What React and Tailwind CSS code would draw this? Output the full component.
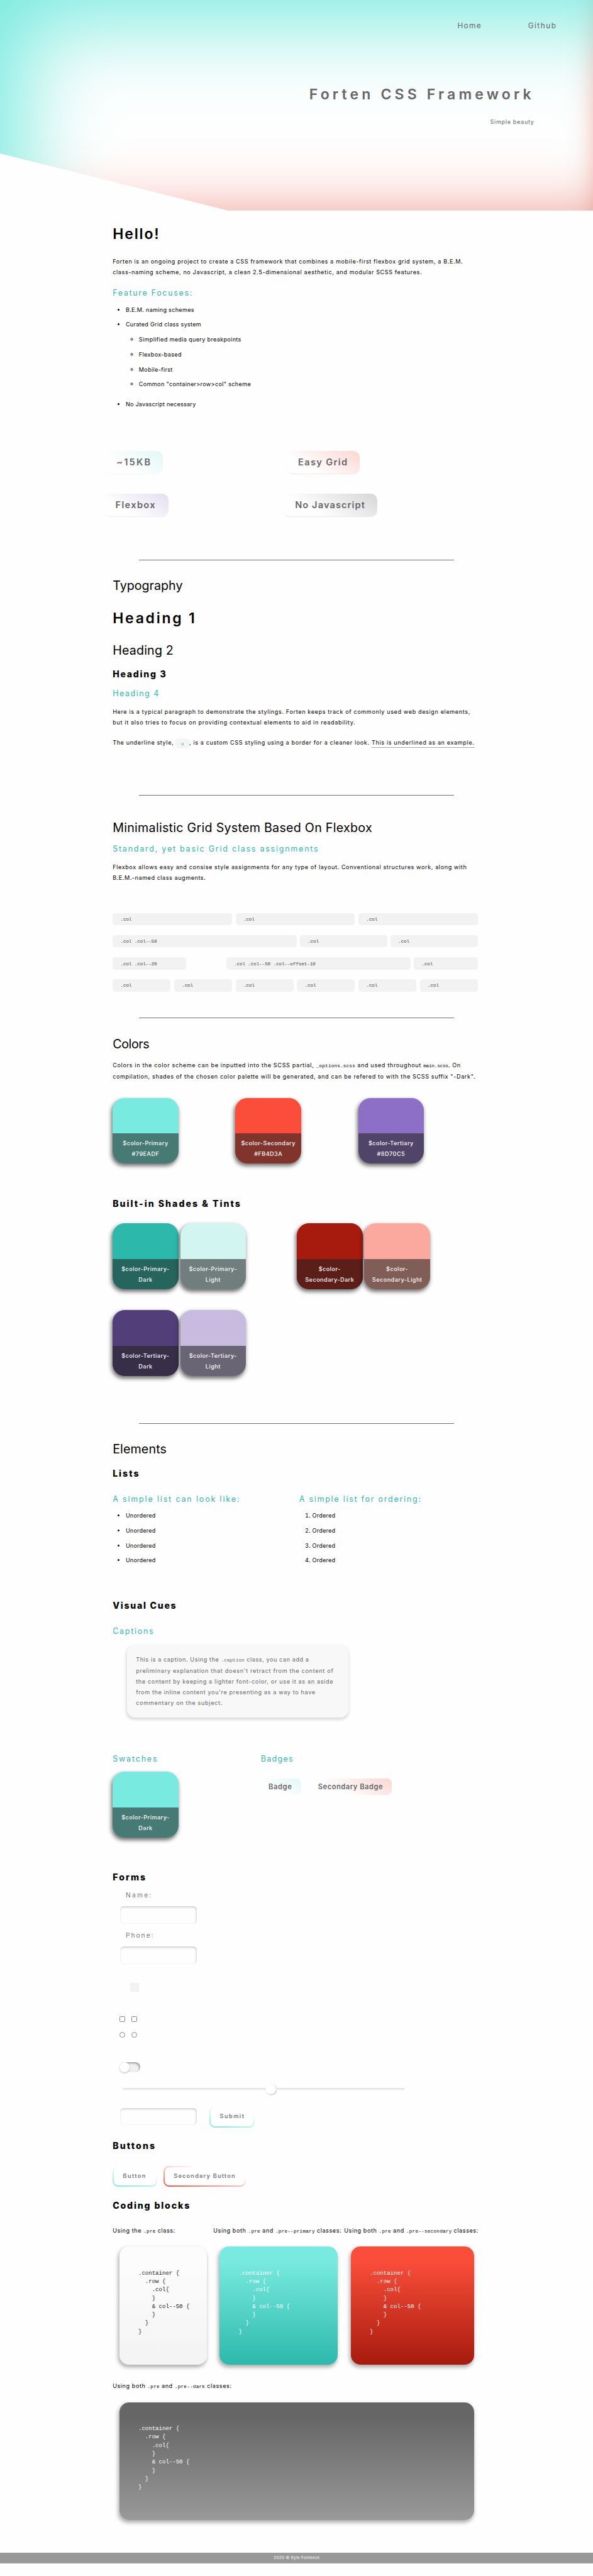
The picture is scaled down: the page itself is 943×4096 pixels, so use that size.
import React from "react";

const H1 = ({ className = "", children }) => (
  <h1 className={`h-[40px] pt-px text-[33px] font-semibold leading-[40px] whitespace-nowrap ${className}`}>{children}</h1>
);
const H2 = ({ className = "", children }) => (
  <h2 className={`h-[36px] pt-[0.8px] text-[28.2px] leading-[36px] whitespace-nowrap ${className}`}>{children}</h2>
);
const H3 = ({ className = "", children }) => (
  <h3 className={`text-[20.2px] font-extrabold leading-[28px] whitespace-nowrap ${className}`}>{children}</h3>
);
const H4 = ({ className = "", children }) => (
  <h4 className={`text-[18px] leading-[24px] text-[#2cb9ab] whitespace-nowrap ${className}`}>{children}</h4>
);
const Code = ({ className = "tracking-[0.35px]", children }) => (
  <code className={`font-['Liberation_Mono',monospace] text-[11px] leading-none ${className}`}>{children}</code>
);
const Rule = ({ className = "" }) => <div className={`ml-[60px] h-px w-[719px] bg-[#6e6e6e] ${className}`} />;

const BigBadge = ({ className, children }) => (
  <div className={`h-[54px] rounded-[15px] border-b pt-[10.5px] text-[21px] font-semibold leading-[33px] text-[#666] whitespace-nowrap ${className}`}>
    {children}
  </div>
);

const Col = ({ className = "flex-1", children }) => (
  <div className={`h-[28px] rounded-[6px] bg-[#f2f2f2] pl-[17.6px] pt-[2px] font-['Liberation_Mono',monospace] text-[11px] leading-[28px] tracking-[-0.18px] text-[#444] whitespace-nowrap ${className}`}>
    {children}
  </div>
);

const Swatch = ({ color, lines, className = "" }) => (
  <div className={`flex h-[150px] w-[150px] flex-none flex-col justify-end overflow-hidden rounded-[28px] shadow-[-2px_5px_9px_rgba(0,0,0,0.55)] ${color} ${className}`}>
    <div className="h-[69px] bg-[rgba(34,34,34,0.56)] pt-[11.6px] text-center text-[13px] font-medium leading-[24px] tracking-[0.71px] text-[#fcfcfc] whitespace-nowrap">
      {lines.map((l) => <div key={l}>{l}</div>)}
    </div>
  </div>
);

const Field = ({ className = "" }) => (
  <div className={`h-[39px] w-[175px] rounded-[8px] shadow-[inset_-1px_2px_5px_rgba(0,0,0,0.22)] ${className}`} />
);

const PRIMARY_BORDER = "[background:linear-gradient(#fefefe,#fefefe)_padding-box,linear-gradient(13deg,#79eadf,#fefefe_70%)_border-box]";
const SECONDARY_BORDER = "[background:linear-gradient(#fefefe,#fefefe)_padding-box,linear-gradient(13deg,#fb4d3a,#fefefe_70%)_border-box]";
const Button = ({ className, children }) => (
  <div className={`h-[48px] rounded-[13px] border-[3px] border-transparent pl-[20.5px] text-[13px] font-semibold text-[#777] whitespace-nowrap ${className}`}>
    {children}
  </div>
);

const PRE = `.container {
  .row {
    .col{
    }
    & col--50 {
    }
  }
}`;
const Pre = ({ className }) => (
  <pre className={`h-[269px] rounded-[22px] pl-[43.5px] pt-[51px] font-['Liberation_Mono',monospace] text-[13px] leading-[19.07px] shadow-[-2px_5px_9px_rgba(0,0,0,0.33)] ${className}`}>
    {PRE}
  </pre>
);

export default function App() {
  return (
    <div className="w-full overflow-hidden bg-[#fefefe]">
      <div className="flex w-[1353px] flex-col pb-[27px] font-['Inter',sans-serif] text-[13px] leading-[24px] text-black [zoom:0.6972]">
        <header className="flex h-[480px] flex-col items-end bg-[#fefefe] text-[#666] shadow-[inset_100px_100px_200px_-50px_#79eadf,inset_-66px_0px_80px_-100px_#fb4d3a,inset_0px_-150px_180px_-200px_#fb4d3a] [clip-path:polygon(0_0,100%_0,100%_100%,520px_100%,0_350px)] whitespace-nowrap">
          <nav className="mt-[46.8px] flex pr-[83px] text-[17px]">
            <span className="mr-[105.5px] tracking-[1.98px]">Home</span>
            <span className="tracking-[2.14px]">Github</span>
          </nav>
          <div className="mt-[126.2px] pr-[134px] text-[33px] font-semibold leading-[40px] tracking-[7.4px]">Forten CSS Framework</div>
          <div className="mt-[30.3px] pr-[134.5px] tracking-[0.99px]">Simple beauty</div>
        </header>

        <main className="ml-[257px] flex w-[833px] flex-col">
          <H1 className="mt-[34px] tracking-[2.68px]">Hello!</H1>
          <p className="mt-[31.6px] tracking-[0.9px] whitespace-nowrap">
            Forten is an ongoing project to create a CSS framework that combines a mobile-first flexbox grid system, a B.E.M.<br />
            class-naming scheme, no Javascript, a clean 2.5-dimensional aesthetic, and modular SCSS features.
          </p>
          <H4 className="mt-[23.7px] tracking-[2.37px]">Feature Focuses:</H4>
          <ul className="mt-[14px] list-disc space-y-[10px] pl-[29.8px] tracking-[0.44px]">
            <li>B.E.M. naming schemes</li>
            <li>
              Curated Grid class system
              <ul className="mt-[10px] mb-[22px] list-[circle] space-y-[10px] pl-[30px] tracking-[0.5px]">
                <li>Simplified media query breakpoints</li>
                <li>Flexbox-based</li>
                <li>Mobile-first</li>
                <li>Common "container&gt;row&gt;col" scheme</li>
              </ul>
            </li>
            <li className="tracking-[0.34px]">No Javascript necessary</li>
          </ul>

          <div className="mt-[92.5px] flex">
            <BigBadge className="-ml-[18.4px] w-[133.2px] border-[#f0fafa] bg-[linear-gradient(30deg,#fefefe_35%,#e0f8f6)] pl-[27px] tracking-[3.15px]">~15KB</BigBadge>
            <BigBadge className="ml-[282.2px] w-[167px] border-[#fbe6e3] bg-[linear-gradient(30deg,#fefefe_30%,#fbd6d1)] pl-[26px] tracking-[1.91px]">Easy Grid</BigBadge>
          </div>
          <div className="mt-[44px] flex">
            <BigBadge className="-ml-[21.3px] w-[148px] border-[#efecf5] bg-[linear-gradient(30deg,#fefefe_30%,#e3def0)] pl-[27.5px] tracking-[1.91px]">Flexbox</BigBadge>
            <BigBadge className="ml-[262.3px] w-[214px] border-[#e8e8e8] bg-[linear-gradient(30deg,#fefefe_30%,#d6d6d6)] pl-[27px] tracking-[1.54px]">No Javascript</BigBadge>
          </div>
          <Rule className="mt-[97px]" />

          <H2 className="mt-[40.2px] tracking-[0.01px]">Typography</H2>
          <H1 className="mt-[36.8px] tracking-[3.94px]">Heading 1</H1>
          <H2 className="mt-[34.2px] tracking-[0.24px]">Heading 2</H2>
          <H3 className="mt-[23.1px] tracking-[2.49px]">Heading 3</H3>
          <H4 className="mt-[18.3px] tracking-[2.16px]">Heading 4</H4>
          <p className="mt-[18px] tracking-[0.91px] whitespace-nowrap">
            Here is a typical paragraph to demonstrate the stylings. Forten keeps track of commonly used web design elements,<br />
            <span className="tracking-[0.98px]">but it also tries to focus on providing contextual elements to aid in readability.</span>
          </p>
          <p className="mt-[22.7px] flex h-[24px] tracking-[0.89px] whitespace-nowrap">
            <span>The underline style,</span>
            <code className="mt-px ml-[4.5px] h-[23px] w-[31px] rounded-[6px] bg-[#f5f5f5] text-center font-['Liberation_Mono',monospace] text-[11px] leading-[26px] text-[#2cb9ab]">u</code>
            <span>, is a custom CSS styling using a border for a cleaner look.</span>
            <span className="ml-[4.8px] h-[22.7px] border-b-2 border-[#a8a8a8] tracking-[0.92px]">This is underlined as an example.</span>
          </p>
          <Rule className="mt-[106.5px]" />

          <H2 className="mt-[54.9px] tracking-[0.38px]">Minimalistic Grid System Based On Flexbox</H2>
          <H4 className="mt-[19.7px] tracking-[2.51px]">Standard, yet basic Grid class assignments</H4>
          <p className="mt-[17.7px] tracking-[0.89px] whitespace-nowrap">
            Flexbox allows easy and consise style assignments for any type of layout. Conventional structures work, along with<br />
            <span className="tracking-[0.8px]">B.E.M.-named class augments.</span>
          </p>
          <div className="mt-[67.7px] flex gap-[8px]">
            <Col>.col</Col><Col>.col</Col><Col>.col</Col>
          </div>
          <div className="mt-[22px] flex gap-[7px]">
            <Col className="w-[420px]">.col .col--50</Col><Col>.col</Col><Col>.col</Col>
          </div>
          <div className="mt-[23px] flex gap-[8px]">
            <Col className="w-[168px]">.col .col--20</Col>
            <Col className="ml-[83px] w-[420px]">.col .col--50 .col--offset-10</Col>
            <Col>.col</Col>
          </div>
          <div className="mt-[22px] flex gap-[8px]">
            <Col>.col</Col><Col>.col</Col><Col>.col</Col><Col>.col</Col><Col>.col</Col><Col>.col</Col>
          </div>
          <Rule className="mt-[60px]" />

          <H2 className="mt-[40.6px] tracking-[-0.56px]">Colors</H2>
          <p className="mt-[17.7px] leading-[26px] tracking-[0.97px] whitespace-nowrap">
            Colors in the color scheme can be inputted into the SCSS partial, <Code className="tracking-[0.27px]">_options.scss</Code> and used throughout <Code className="tracking-[-0.3px]">main.scss</Code>. On<br />
            <span className="tracking-[0.91px]">compilation, shades of the chosen color palette will be generated, and can be refered to with the SCSS suffix "-Dark".</span>
          </p>
          <div className="mt-[35.7px] flex gap-[130px]">
            <Swatch color="bg-[#79eadf]" lines={["$color-Primary", "#79EADF"]} />
            <Swatch color="bg-[#fb4d3a]" lines={["$color-Secondary", "#FB4D3A"]} />
            <Swatch color="bg-[#8d70c5]" lines={["$color-Tertiary", "#8D70C5"]} />
          </div>

          <H3 className="mt-[76.6px] tracking-[2.92px]">Built-in Shades &amp; Tints</H3>
          <div className="mt-[31.4px] flex">
            <Swatch color="bg-[#2cb9ab]" lines={["$color-Primary-", "Dark"]} />
            <Swatch className="ml-[4px]" color="bg-[#d3f5f1]" lines={["$color-Primary-", "Light"]} />
            <Swatch className="ml-[116px]" color="bg-[#a61b0d]" lines={["$color-", "Secondary-Dark"]} />
            <Swatch className="ml-[4px]" color="bg-[#fba99e]" lines={["$color-", "Secondary-Light"]} />
          </div>
          <div className="mt-[48px] flex gap-[4px]">
            <Swatch color="bg-[#523e78]" lines={["$color-Tertiary-", "Dark"]} />
            <Swatch color="bg-[#c7bbdf]" lines={["$color-Tertiary-", "Light"]} />
          </div>
          <Rule className="mt-[108px]" />

          <H2 className="mt-[39.9px] tracking-[0.16px]">Elements</H2>
          <H3 className="mt-[23.4px] tracking-[2.84px]">Lists</H3>
          <div className="mt-[33.3px] flex">
            <div className="w-[425.4px]">
              <H4 className="tracking-[2.62px]">A simple list can look like:</H4>
              <ul className="mt-[14px] list-disc space-y-[10px] pl-[29.8px] tracking-[0.29px]">
                <li>Unordered</li><li>Unordered</li><li>Unordered</li><li>Unordered</li>
              </ul>
            </div>
            <div>
              <H4 className="tracking-[2.48px]">A simple list for ordering:</H4>
              <ol className="mt-[14px] list-decimal space-y-[10px] pl-[29.8px] tracking-[0.37px]">
                <li>Ordered</li><li>Ordered</li><li>Ordered</li><li>Ordered</li>
              </ol>
            </div>
          </div>

          <H3 className="mt-[76px] tracking-[2.49px]">Visual Cues</H3>
          <H4 className="mt-[33px] tracking-[2.45px]">Captions</H4>
          <div className="mt-[19.4px] ml-[32.7px] h-[165px] w-[505.3px] rounded-[18px] bg-[#f8f8f8] pt-[22px] pl-[20.4px] tracking-[1px] text-[#666] shadow-[-1px_3px_7px_rgba(0,0,0,0.17)] whitespace-nowrap">
            <div className="h-[26px] tracking-[0.86px]">This is a caption. Using the <Code className="tracking-[0.11px]">.caption</Code> class, you can add a</div>
            <div className="tracking-[1.03px]">preliminary explanation that doesn't retract from the content of</div>
            <div className="tracking-[0.96px]">the content by keeping a lighter font-color, or use it as an aside</div>
            <div className="tracking-[0.94px]">from the inline content you're presenting as a way to have</div>
            <div>commentary on the subject.</div>
          </div>

          <div className="mt-[83px] flex">
            <div className="w-[338px]">
              <H4 className="tracking-[2.58px]">Swatches</H4>
              <Swatch className="mt-[17px]" color="bg-[#79eadf]" lines={["$color-Primary-", "Dark"]} />
            </div>
            <div>
              <H4 className="tracking-[1.83px]">Badges</H4>
              <div className="mt-[32px] flex text-[16px] font-semibold leading-[38px] text-[#666] whitespace-nowrap">
                <div className="h-[38px] w-[92px] rounded-[11px] bg-[linear-gradient(30deg,#fefefe_35%,#e0f8f6)] pl-[17.5px] tracking-[0.92px]">Badge</div>
                <div className="ml-[21px] h-[38px] w-[186px] rounded-[11px] bg-[linear-gradient(30deg,#fefefe_33%,#fbd6d1)] pl-[17.5px] tracking-[0.75px]">Secondary Badge</div>
              </div>
            </div>
          </div>

          <H3 className="mt-[76.6px] tracking-[2.96px]">Forms</H3>
          <form className="flex flex-col text-[#777]">
            <label className="mt-[14px] ml-[29.8px] text-[14.7px] tracking-[3.26px]">Name:</label>
            <Field className="mt-[14.4px] ml-[17px]" />
            <label className="mt-[14.6px] ml-[29.8px] text-[14.7px] tracking-[2.85px]">Phone:</label>
            <Field className="mt-[14.4px] ml-[17px]" />
            <div className="mt-[43px] ml-[40px] h-[20px] w-[20px] bg-[#f2f2f2]" />
            <div className="mt-[57px] ml-[15px] flex gap-[15px]">
              <div className="h-[13px] w-[13px] rounded-[2.5px] border border-[#8a8a8a] bg-white" />
              <div className="h-[13px] w-[13px] rounded-[2.5px] border border-[#8a8a8a] bg-white" />
            </div>
            <div className="mt-[22px] ml-[15px] flex gap-[15px]">
              <div className="h-[13px] w-[13px] rounded-full border border-[#8a8a8a] bg-white" />
              <div className="h-[13px] w-[13px] rounded-full border border-[#8a8a8a] bg-white" />
            </div>
            <div className="mt-[56px] ml-[15px] h-[24px] w-[48px] rounded-full bg-[#f0f0f0] shadow-[inset_-2px_3px_4px_rgba(0,0,0,0.33)]">
              <div className="h-[24px] w-[24px] rounded-full bg-white shadow-[0_2px_4px_rgba(0,0,0,0.22)]" />
            </div>
            <div className="mt-[26px] ml-[22px] flex h-[24px] w-[645px] items-center">
              <div className="h-[7px] w-[327px] rounded-l-[4px] bg-[linear-gradient(#dedede,#f9f9f9)]" />
              <div className="h-[24px] w-[24px] rounded-full bg-white shadow-[1px_1px_3px_rgba(0,0,0,0.35)]" />
              <div className="h-[7px] flex-1 rounded-r-[4px] bg-[linear-gradient(#dedede,#f9f9f9)]" />
            </div>
            <div className="mt-[27px] flex">
              <Field className="mt-[4px] ml-[17px]" />
              <Button className={`ml-[29px] w-[103.3px] leading-[40px] tracking-[2.19px] ${PRIMARY_BORDER}`}>Submit</Button>
            </div>
          </form>

          <H3 className="mt-[27.6px] tracking-[3.06px]">Buttons</H3>
          <div className="mt-[32.4px] flex">
            <Button className={`w-[101px] leading-[41px] tracking-[2.1px] ${PRIMARY_BORDER}`}>Button</Button>
            <Button className={`ml-[15px] w-[188px] leading-[41px] tracking-[1.81px] ${SECONDARY_BORDER}`}>Secondary Button</Button>
          </div>

          <H3 className="mt-[28.6px] tracking-[2.68px]">Coding blocks</H3>
          <div className="mt-[31.7px] flex tracking-[0.83px] whitespace-nowrap">
            <div className="w-[229.6px]">Using the <Code>.pre</Code> class:</div>
            <div className="w-[298.4px] word-spacing-0">Using both <Code>.pre</Code> and <Code>.pre--primary</Code> classes:</div>
            <div className="w-[305px]">Using both <Code>.pre</Code> and <Code>.pre--secondary</Code> classes:</div>
          </div>
          <div className="mt-[23.7px] flex">
            <Pre className="ml-[15px] w-[199.7px] bg-[linear-gradient(#fcfcfc_15%,#f3f3f3)] text-[#222]" />
            <Pre className="ml-[29.3px] w-[269px] bg-[linear-gradient(#79eadf_12%,#2cb9ab)] text-white" />
            <Pre className="ml-[30px] w-[281px] bg-[linear-gradient(#fb4d3a_12%,#a61b0d)] text-white" />
          </div>
          <div className="mt-[38.3px] tracking-[0.83px] whitespace-nowrap">Using both <Code>.pre</Code> and <Code>.pre--dark</Code> classes:</div>
          <Pre className="mt-[23.7px] ml-[15px] w-[810px] bg-[linear-gradient(#666_12%,#999)] text-white" />
        </main>

        <footer className="mt-[75px] h-[24px] bg-[#999] text-center text-[9px] leading-[24px] tracking-[0.54px] text-white">2020 © Kyle Fontenot</footer>
      </div>
    </div>
  );
}
